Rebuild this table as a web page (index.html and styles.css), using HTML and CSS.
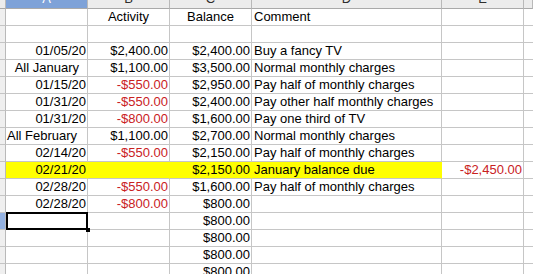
FILE: index.html
```html
<!DOCTYPE html>
<html>
<head>
<meta charset="utf-8">
<link rel="stylesheet" href="styles.css">
</head>
<body>
<div class="sheet">
  <div class="hd corner"></div><div class="hd hd-sel">A</div><div class="hd">B</div><div class="hd">C</div><div class="hd">D</div><div class="hd">E</div><div class="hd last"></div>

  <div class="rh"></div><div class="c"></div><div class="c ctr">Activity</div><div class="c ctr">Balance</div><div class="c">Comment</div><div class="c"></div><div class="c last"></div>

  <div class="rh"></div><div class="c"></div><div class="c"></div><div class="c"></div><div class="c"></div><div class="c"></div><div class="c last"></div>

  <div class="rh"></div><div class="c r">01/05/20</div><div class="c r">$2,400.00</div><div class="c r">$2,400.00</div><div class="c">Buy a fancy TV</div><div class="c"></div><div class="c last"></div>

  <div class="rh"></div><div class="c r jan">All January</div><div class="c r">$1,100.00</div><div class="c r">$3,500.00</div><div class="c">Normal monthly charges</div><div class="c"></div><div class="c last"></div>

  <div class="rh"></div><div class="c r">01/15/20</div><div class="c r neg">-$550.00</div><div class="c r">$2,950.00</div><div class="c">Pay half of monthly charges</div><div class="c"></div><div class="c last"></div>

  <div class="rh"></div><div class="c r">01/31/20</div><div class="c r neg">-$550.00</div><div class="c r">$2,400.00</div><div class="c">Pay other half monthly charges</div><div class="c"></div><div class="c last"></div>

  <div class="rh"></div><div class="c r">01/31/20</div><div class="c r neg">-$800.00</div><div class="c r">$1,600.00</div><div class="c">Pay one third of TV</div><div class="c"></div><div class="c last"></div>

  <div class="rh"></div><div class="c feb">All February</div><div class="c r">$1,100.00</div><div class="c r">$2,700.00</div><div class="c">Normal monthly charges</div><div class="c"></div><div class="c last"></div>

  <div class="rh"></div><div class="c r">02/14/20</div><div class="c r neg">-$550.00</div><div class="c r">$2,150.00</div><div class="c">Pay half of monthly charges</div><div class="c"></div><div class="c last"></div>

  <div class="rh"></div><div class="c r hl">02/21/20</div><div class="c hl"></div><div class="c r hl">$2,150.00</div><div class="c hl">January balance due</div><div class="c r neg">-$2,450.00</div><div class="c last"></div>

  <div class="rh"></div><div class="c r">02/28/20</div><div class="c r neg">-$550.00</div><div class="c r">$1,600.00</div><div class="c">Pay half of monthly charges</div><div class="c"></div><div class="c last"></div>

  <div class="rh"></div><div class="c r">02/28/20</div><div class="c r neg">-$800.00</div><div class="c r">$800.00</div><div class="c"></div><div class="c"></div><div class="c last"></div>

  <div class="rh rh-sel"></div><div class="c sel"></div><div class="c"></div><div class="c r">$800.00</div><div class="c"></div><div class="c"></div><div class="c last"></div>

  <div class="rh"></div><div class="c"></div><div class="c"></div><div class="c r">$800.00</div><div class="c"></div><div class="c"></div><div class="c last"></div>

  <div class="rh"></div><div class="c"></div><div class="c"></div><div class="c r">$800.00</div><div class="c"></div><div class="c"></div><div class="c last"></div>

  <div class="rh"></div><div class="c"></div><div class="c"></div><div class="c r">$800.00</div><div class="c"></div><div class="c"></div><div class="c last"></div>
</div>
</body>
</html>
```

FILE: styles.css
```css
html, body {
  margin: 0;
  padding: 0;
  background: #ffffff;
  overflow: hidden;
}

body {
  width: 533px;
  height: 274px;
  font-family: "Liberation Sans", Arial, sans-serif;
  font-size: 13px;
  color: #000000;
}

.sheet {
  display: grid;
  grid-template-columns: 6px 82px 82px 82px 190px 82px 1fr;
  grid-template-rows: 19px;
  grid-auto-rows: 17px;
  margin-top: -10px;
}

.sheet > div {
  box-sizing: border-box;
  white-space: nowrap;
  overflow: hidden;
  line-height: 16px;
}

.hd {
  background: #ececec;
  border-right: 1px solid #b9b9b9;
  border-bottom: 1px solid #a9a9a9;
  text-align: center;
  color: #2e2e2e;
  line-height: 18px !important;
}

.hd-sel {
  background: #7ea2d8;
  color: #ffffff;
}

.corner {
  background: #ececec;
}

.rh {
  background: #efefef;
  border-right: 1px solid #b9b9b9;
  border-bottom: 1px solid #c4c4c4;
}

.rh-sel {
  background: #93b1e0;
}

.c {
  border-right: 1px solid #c6c6c6;
  border-bottom: 1px solid #c6c6c6;
  padding: 0 2px;
}

.c.last {
  border-right: none;
}

.r {
  text-align: right;
  padding-right: 1px;
}

.ctr {
  text-align: center;
}

.jan {
  padding-right: 8px;
}

.feb {
  padding-left: 1px;
}

.neg {
  color: #c9211e;
}

.hl {
  background: #ffff00;
  border-right-color: #ffff00;
}

.sheet > .sel {
  position: relative;
  overflow: visible;
}

.sel::before {
  content: "";
  position: absolute;
  top: -1px;
  left: 0;
  right: -1px;
  bottom: -1px;
  border: 2px solid #000000;
}

.sel::after {
  content: "";
  position: absolute;
  right: -3px;
  bottom: -3px;
  width: 4px;
  height: 4px;
  background: #000000;
}
```
